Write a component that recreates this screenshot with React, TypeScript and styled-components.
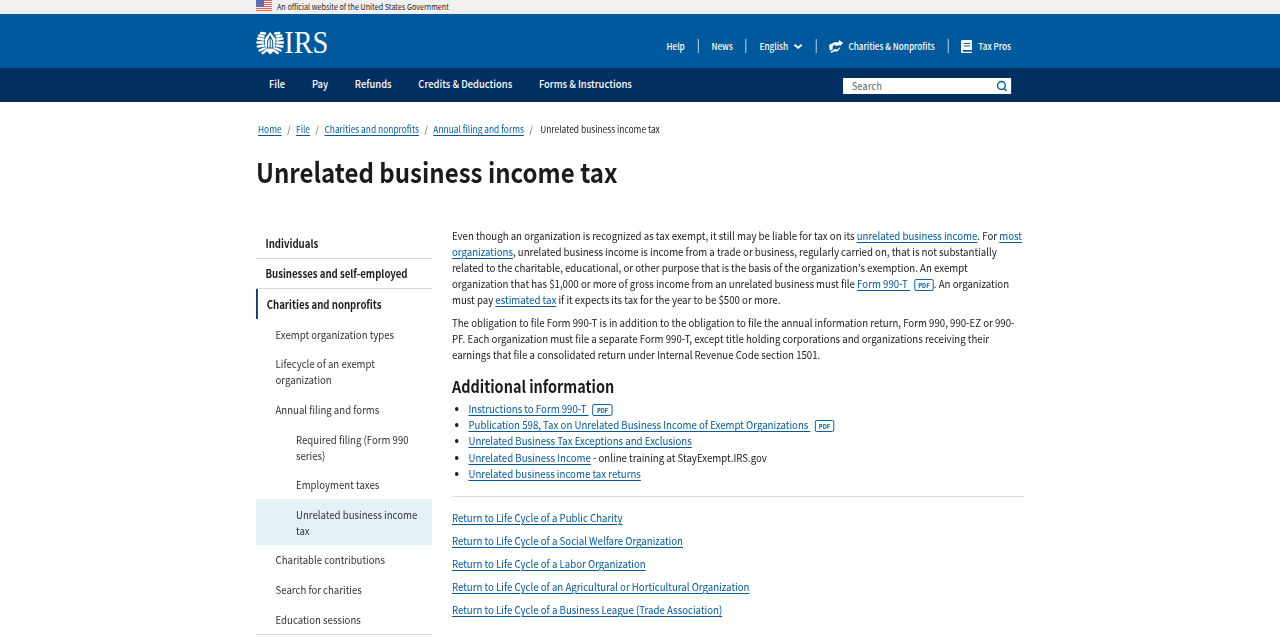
import React from "react";
import styled, { createGlobalStyle } from "styled-components";
import { Search as SearchIcon, ChevronDown } from "lucide-react";

/* The reference's text is a narrow cut: the page is drawn wider and squeezed back by 0.88. */
const Global = createGlobalStyle`
  html, body { margin: 0; padding: 0; background: #fff; height: 637px; overflow: hidden; }
  body { font-family: "Noto Sans CJK JP", "Noto Sans", sans-serif; color: #1b1b1b; font-size: 11px; line-height: 16px; }
  * { box-sizing: border-box; }
`;

const Page = styled.div`
  width: 1454.5px;
  height: 637px;
  overflow: hidden;
  transform: scaleX(0.88);
  transform-origin: 0 0;
`;
const Wrap = styled.div`
  width: 872.7px;
  margin-left: 290.9px;
`;
const Banner = styled.div`
  height: 14px;
  background: #f0f0f0;
`;
const BannerInner = styled(Wrap)`
  display: flex;
  align-items: center;
  gap: 5.7px;
  height: 12px;
  font-size: 8.2px;
  line-height: 12px;
  color: #1b1b1b;
`;
const Header = styled.header`
  height: 54px;
  background: #00599c;
`;
const HeaderInner = styled(Wrap)`
  width: 858px;
  height: 100%;
  display: flex;
  align-items: center;
  justify-content: space-between;
`;
const Logo = styled.div`
  display: flex;
  align-items: center;
  margin-top: 4px;
  color: #fff;
`;
const LogoText = styled.span`
  display: inline-block;
  width: 49px;
  font-family: "Liberation Serif", serif;
  font-size: 31px;
  line-height: 26px;
  transform: scaleX(1.04);
  transform-origin: 0 50%;
`;
const Tools = styled.div`
  display: flex;
  align-items: center;
  margin-top: 10px;
  color: #fff;
  font-size: 9.3px;
  font-weight: 500;
  line-height: 14px;
`;
const Tool = styled.a<{ $divider?: boolean }>`
  display: flex;
  align-items: center;
  gap: 5.7px;
  height: 14px;
  padding: 0 14.7px;
  border-right: ${(p) => (p.$divider ? "1px solid #d6e4ef" : "none")};
  &:last-child { padding-right: 0; }
`;
const LangTool = styled(Tool)`
  gap: 4.5px;
  padding-right: 12.7px;
`;
const MainNav = styled.nav`
  height: 34px;
  background: #002f62;
`;
const MainNavInner = styled(Wrap)`
  width: 858px;
  height: 100%;
  display: flex;
  align-items: center;
  justify-content: space-between;
`;
const NavList = styled.div`
  display: flex;
  gap: 30.4px;
  padding-left: 14.8px;
  margin-top: -2px;
  color: #fff;
  font-size: 10.7px;
  font-weight: 500;
`;
const SearchBox = styled.div`
  width: 191px;
  height: 16px;
  margin-top: 2px;
  background: #fff;
  display: flex;
  align-items: center;
  justify-content: space-between;
  padding: 0 4px 1px 10.2px;
  font-size: 10px;
  color: #5c5c5c;
  letter-spacing: 0.4px;
`;
const Crumbs = styled.div`
  display: flex;
  gap: 6.3px;
  margin-top: 19px;
  height: 16px;
  padding-left: 2.3px;
  font-size: 9.55px;
  line-height: 16px;
`;
const Sep = styled.span`
  color: #555;
`;
const Link = styled.a`
  color: #00599c;
  text-decoration: underline;
  text-underline-offset: 1.5px;
  text-decoration-thickness: 1px;
`;
const Title = styled.h1`
  margin: 16px 0 0;
  font-size: 27.3px;
  line-height: 36px;
  font-weight: 700;
  color: #1b1b1b;
`;
const Columns = styled.div`
  display: flex;
  margin-top: 36px;
  gap: 22.7px;
`;
const Side = styled.aside`
  width: 200px;
  flex: none;
  margin-top: 3px;
`;
const SideItem = styled.div<{ $level?: number; $bold?: boolean; $rule?: boolean; $bar?: boolean; $active?: boolean }>`
  padding: 6.82px 9px 6.82px ${(p) => (p.$level === 2 ? 45.5 : p.$level === 1 ? 22.2 : p.$bar ? 10.2 : 10.8)}px;
  font-weight: ${(p) => (p.$bold ? 700 : 400)};
  color: ${(p) => (p.$bold ? "#1b1b1b" : "#333")};
  font-size: 10.95px;
  border-bottom: ${(p) => (p.$rule ? "1px solid #d9d9d9" : "0")};
  border-left: ${(p) => (p.$bar ? "2.3px solid #00305f" : "0")};
  background: ${(p) => (p.$active ? "#e4f2f8" : "transparent")};
`;
const Content = styled.main`
  width: 648.5px;
  flex: none;
  margin-top: 2px;
`;
const Para = styled.p`
  margin: 0 0 7px;
  font-size: 10.99px;
  line-height: 16px;
  color: #1b1b1b;
`;
const H2 = styled.h2`
  margin: 13px 0 3px;
  font-size: 16.4px;
  line-height: 22px;
  font-weight: 700;
`;
const List = styled.ul`
  margin: 0;
  padding: 0 0 0 18.75px;
  font-size: 10.99px;
  line-height: 16.2px;
`;
const Pdf = styled.span`
  display: inline-block;
  width: 22.7px;
  height: 12px;
  margin-left: 4.5px;
  border: 1px solid #00599c;
  border-radius: 2px;
  color: #00599c;
  font-size: 6.5px;
  font-weight: 700;
  line-height: 10px;
  text-align: center;
  vertical-align: 0;
`;
const Rule = styled.hr`
  margin: 15px 0 12px;
  border: 0;
  border-top: 1px solid #dcdcdc;
  width: 650px;
`;
const Returns = styled.div`
  display: flex;
  flex-direction: column;
  gap: 7px;
  font-size: 10.99px;
  line-height: 16px;
`;

const Flag = () => (
  <svg width="18.2" height="12" viewBox="0 0 16 12" preserveAspectRatio="none">
    <rect width="16" height="12" fill="#f1f1f1" />
    {[0, 2, 4, 6, 8, 10].map((y) => <rect key={y} y={y} width="16" height="1" fill="#e8604c" />)}
    <rect width="8" height="7" fill="#5b6bb5" />
  </svg>
);

const Emblem = () => (
  <svg width="32" height="24" viewBox="0 0 28 24" preserveAspectRatio="none" fill="none" stroke="#fff" strokeLinecap="round">
    <g strokeWidth="2.400">
      <path d="M9 2.500 5 2M7.500 5.500 3 4.500M7 8.500 1.800 7.500M7 11.500 1.200 11.500M7.500 14.500 1.800 15.500M8 17.500 3.500 19.500M9.500 20 6.500 22" />
      <path d="M19 2.500 23 2M20.500 5.500 25 4.500M21 8.500 26.200 7.500M21 11.500 26.800 11.500M20.500 14.500 26.200 15.500M20 17.500 24.500 19.500M18.500 20 21.500 22" />
    </g>
    <path d="M14 1 19.500 8 18.500 19 14 23.500 9.500 19 8.500 8z" fill="#fff" stroke="none" />
    <path d="M14 5 11.500 10v6M14 5l2.500 5v6M10.500 17h7M14 7v10" stroke="#00599c" strokeWidth="1" />
  </svg>
);

const Hands = () => (
  <svg width="16" height="13" viewBox="0 0 15 13" preserveAspectRatio="none" fill="#fff">
    <path d="M0 5 4 3l3-1 3 .5L11 0l4 3-3 3-1-1-3 1-2-1-2 1v3L1 11z" />
    <path d="M1.500 12 6 9l3 .5 2-2 1 .5-3 3.500H5L3 13z" />
  </svg>
);

const Book = () => (
  <svg width="13.6" height="13" viewBox="0 0 12 13" preserveAspectRatio="none" fill="#fff">
    <path d="M1.500 0H11v10H2.200a.9.9 0 0 0 0 1.700H11V13H1.500A1.500 1.500 0 0 1 0 11.500V1.500A1.500 1.500 0 0 1 1.500 0z" />
    <path d="M3 3h6v1H3zM3 5.500h6v1H3z" fill="#00599c" />
  </svg>
);

const nav = ["File", "Pay", "Refunds", "Credits & Deductions", "Forms & Instructions"];
const returns = [
  "Return to Life Cycle of a Public Charity",
  "Return to Life Cycle of a Social Welfare Organization",
  "Return to Life Cycle of a Labor Organization",
  "Return to Life Cycle of an Agricultural or Horticultural Organization",
  "Return to Life Cycle of a Business League (Trade Association)",
];

export default function App() {
  return (
    <Page>
      <Global />
      <Banner>
        <BannerInner><Flag /><span>An official website of the United States Government</span></BannerInner>
      </Banner>
      <Header>
        <HeaderInner>
          <Logo><Emblem /><LogoText>IRS</LogoText></Logo>
          <Tools>
            <Tool $divider>Help</Tool>
            <Tool $divider>News</Tool>
            <LangTool $divider>English <ChevronDown width={14} height={11} preserveAspectRatio="none" strokeWidth={4} /></LangTool>
            <Tool $divider><Hands />Charities &amp; Nonprofits</Tool>
            <Tool><Book />Tax Pros</Tool>
          </Tools>
        </HeaderInner>
      </Header>
      <MainNav>
        <MainNavInner>
          <NavList>{nav.map((n) => <span key={n}>{n}</span>)}</NavList>
          <SearchBox>Search <SearchIcon width={13} height={12} preserveAspectRatio="none" color="#00599c" strokeWidth={3} /></SearchBox>
        </MainNavInner>
      </MainNav>
      <Wrap>
        <Crumbs>
          <Link>Home</Link><Sep>/</Sep><Link>File</Link><Sep>/</Sep>
          <Link>Charities and nonprofits</Link><Sep>/</Sep><Link>Annual filing and forms</Link><Sep>/</Sep>
          <span>&nbsp;Unrelated business income tax</span>
        </Crumbs>
        <Title>Unrelated business income tax</Title>
        <Columns>
          <Side>
            <SideItem $bold $rule>Individuals</SideItem>
            <SideItem $bold $rule>Businesses and self-employed</SideItem>
            <SideItem $bold $bar>Charities and nonprofits</SideItem>
            <SideItem $level={1}>Exempt organization types</SideItem>
            <SideItem $level={1}>Lifecycle of an exempt organization</SideItem>
            <SideItem $level={1}>Annual filing and forms</SideItem>
            <SideItem $level={2}>Required filing (Form 990 series)</SideItem>
            <SideItem $level={2}>Employment taxes</SideItem>
            <SideItem $level={2} $active>Unrelated business income tax</SideItem>
            <SideItem $level={1}>Charitable contributions</SideItem>
            <SideItem $level={1}>Search for charities</SideItem>
            <SideItem $level={1} $rule>Education sessions</SideItem>
          </Side>
          <Content>
            <Para>
              Even though an organization is recognized as tax exempt, it still may be liable for tax on its <Link>unrelated business income</Link>. For <Link>most organizations</Link>, unrelated business income is income from a trade or business, regularly carried on, that is not substantially related to the charitable, educational, or other purpose that is the basis of the organization's exemption. An exempt organization that has $1,000 or more of gross income from an unrelated business must file <Link>Form 990-T&nbsp;</Link><Pdf>PDF</Pdf>. An organization must pay <Link>estimated tax</Link> if it expects its tax for the year to be $500 or more.
            </Para>
            <Para>
              The obligation to file Form 990-T is in addition to the obligation to file the annual information return, Form 990, 990-EZ or 990-PF. Each organization must file a separate Form 990-T, except title holding corporations and organizations receiving their earnings that file a consolidated return under Internal Revenue Code section 1501.
            </Para>
            <H2>Additional information</H2>
            <List>
              <li><Link>Instructions to Form 990-T&nbsp;</Link><Pdf>PDF</Pdf></li>
              <li><Link>Publication 598, Tax on Unrelated Business Income of Exempt Organizations&nbsp;</Link><Pdf>PDF</Pdf></li>
              <li><Link>Unrelated Business Tax Exceptions and Exclusions</Link></li>
              <li><Link>Unrelated Business Income</Link> - online training at StayExempt.IRS.gov</li>
              <li><Link>Unrelated business income tax returns</Link></li>
            </List>
            <Rule />
            <Returns>{returns.map((r) => <div key={r}><Link>{r}</Link></div>)}</Returns>
          </Content>
        </Columns>
      </Wrap>
    </Page>
  );
}
